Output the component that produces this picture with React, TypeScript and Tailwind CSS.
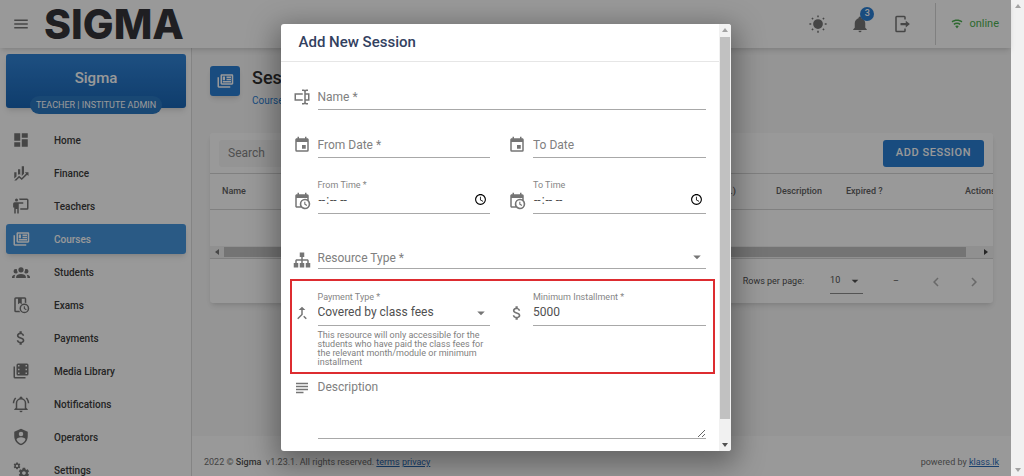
import React from "react";

const paths = {
  menu: "M3,6H21V8H3V6M3,11H21V13H3V11M3,16H21V18H3V16Z",
  home: "M13,3V9H21V3M13,21H21V11H13M3,21H11V15H3M3,13H11V3H3V13Z",
  finance:
    "M6,16.5L3,19.44V11H6M11,14.66L9.43,13.32L8,14.64V7H11M16,13L13,16V3H16M18.81,12.81L17,11H22V16L20.21,14.21L13,21.36L9.53,18.34L5.75,22H3L9.47,15.66L13,18.64",
  teacher:
    "M20,17A2,2 0 0,0 22,15V4A2,2 0 0,0 20,2H9.46C9.81,2.61 10,3.3 10,4H20V15H11V17M15,7V9H9V22H7V16H5V22H3V14H1.5V9A2,2 0 0,1 3.5,7H15M8,4A2,2 0 0,1 6,6A2,2 0 0,1 4,4A2,2 0 0,1 6,2A2,2 0 0,1 8,4Z",
  courses:
    "M4 7V19H19V21H4C2 21 2 19 2 19V7H4M21 5V15H8V5H21M21.3 3H7.7C6.76 3 6 3.7 6 4.55V15.45C6 16.31 6.76 17 7.7 17H21.3C22.24 17 23 16.31 23 15.45V4.55C23 3.7 22.24 3 21.3 3M9 6H12V11H9V6M20 14H9V12H20V14M20 8H14V6H20V8M20 11H14V9H20V11Z",
  students:
    "M12,5.5A3.5,3.5 0 0,1 15.5,9A3.5,3.5 0 0,1 12,12.5A3.5,3.5 0 0,1 8.5,9A3.5,3.5 0 0,1 12,5.5M5,8C5.56,8 6.08,8.15 6.53,8.42C6.38,9.85 6.8,11.27 7.66,12.38C7.16,13.34 6.16,14 5,14A3,3 0 0,1 2,11A3,3 0 0,1 5,8M19,8A3,3 0 0,1 22,11A3,3 0 0,1 19,14C17.84,14 16.84,13.34 16.34,12.38C17.2,11.27 17.62,9.85 17.47,8.42C17.92,8.15 18.44,8 19,8M5.5,18.25C5.5,16.18 8.41,14.5 12,14.5C15.59,14.5 18.5,16.18 18.5,18.25V20H5.5V18.25M0,20V18.5C0,17.11 1.89,15.94 4.45,15.6C3.86,16.28 3.5,17.22 3.5,18.25V20H0M24,20H20.5V18.25C20.5,17.22 20.14,16.28 19.55,15.6C22.11,15.94 24,17.11 24,18.5V20Z",
  exams:
    "M5,1.5H17A2,2 0 0 1 19,3.5V9.3A7 7 0 0 0 17,9V3.5H13V11L10.5,9.3L8,11V3.5H5V19.5H9.7A7 7 0 0 0 11.1,21.5H5A2,2 0 0 1 3,19.5V3.5A2,2 0 0 1 5,1.5M16.5,10A6.5,6.5 0 1 1 16.5,23A6.5,6.5 0 1 1 16.5,10M16.5,12A4.5,4.5 0 1 0 16.5,21A4.5,4.5 0 1 0 16.5,12M15.7,13.5H17.2V16.3L19.5,17.7L18.8,18.9L15.7,17.1Z",
  dollar:
    "M11.8,10.9C9.53,10.31 8.8,9.7 8.8,8.75C8.8,7.66 9.81,6.9 11.5,6.9C13.28,6.9 13.94,7.75 14,9H16.21C16.14,7.28 15.09,5.7 13,5.19V3H10V5.16C8.06,5.58 6.5,6.84 6.5,8.77C6.5,11.08 8.41,12.23 11.2,12.9C13.7,13.5 14.2,14.38 14.2,15.31C14.2,16 13.71,17.1 11.5,17.1C9.44,17.1 8.63,16.18 8.5,15H6.32C6.44,17.19 8.08,18.42 10,18.83V21H13V18.85C14.95,18.48 16.5,17.35 16.5,15.3C16.5,12.46 14.07,11.5 11.8,10.9Z",
  media:
    "M4,6H2V20A2,2 0 0,0 4,22H18V20H4V6M8,2H20A2,2 0 0 1 22,4V16A2,2 0 0 1 20,18H8A2,2 0 0 1 6,16V4A2,2 0 0 1 8,2M8,4V6H10V4H8M8,9V11H10V9H8M8,14V16H10V14H8M18,4V6H20V4H18M18,9V11H20V9H18M18,14V16H20V14H18Z",
  bellRing:
    "M10,21H14A2,2 0 0,1 12,23A2,2 0 0,1 10,21M21,19V20H3V19L5,17V11C5,7.9 7.03,5.17 10,4.29C10,4.19 10,4.1 10,4A2,2 0 0,1 12,2A2,2 0 0,1 14,4C14,4.1 14,4.19 14,4.29C16.97,5.17 19,7.9 19,11V17L21,19M17,11A5,5 0 0,0 12,6A5,5 0 0,0 7,11V18H17V11M19.75,3.19L18.33,4.61C20.04,6.3 21,8.6 21,11H23C23,8.07 21.84,5.25 19.75,3.19M1,11H3C3,8.6 3.96,6.3 5.67,4.61L4.25,3.19C2.16,5.25 1,8.07 1,11Z",
  operator:
    "M12,1L3,5V11C3,16.55 6.84,21.74 12,23C17.16,21.74 21,16.55 21,11V5L12,1M12,5A3,3 0 0,1 15,8A3,3 0 0,1 12,11A3,3 0 0,1 9,8A3,3 0 0,1 12,5M17.13,17C15.92,18.85 14.11,20.24 12,20.92C9.89,20.24 8.08,18.85 6.87,17C6.53,16.5 6.24,16 6,15.47C6,13.82 8.71,12.47 12,12.47C15.29,12.47 18,13.79 18,15.47C17.76,16 17.47,16.5 17.13,17Z",
  cogs: "M15.9,18.45C17.25,18.45 18.35,17.35 18.35,16C18.35,14.65 17.25,13.55 15.9,13.55C14.54,13.55 13.45,14.65 13.45,16C13.45,17.35 14.54,18.45 15.9,18.45M21.1,16.68L22.58,17.84C22.71,17.95 22.75,18.13 22.66,18.29L21.26,20.71C21.17,20.86 21,20.92 20.83,20.86L19.09,20.16C18.73,20.44 18.33,20.67 17.91,20.85L17.64,22.7C17.62,22.87 17.47,23 17.3,23H14.5C14.32,23 14.18,22.87 14.15,22.7L13.89,20.85C13.46,20.67 13.07,20.44 12.71,20.16L10.96,20.86C10.81,20.92 10.62,20.86 10.54,20.71L9.14,18.29C9.05,18.13 9.09,17.95 9.22,17.84L10.7,16.68L10.65,16L10.7,15.31L9.22,14.16C9.09,14.05 9.05,13.86 9.14,13.71L10.54,11.29C10.62,11.13 10.81,11.07 10.96,11.13L12.71,11.84C13.07,11.56 13.46,11.32 13.89,11.15L14.15,9.29C14.18,9.13 14.32,9 14.5,9H17.3C17.47,9 17.62,9.13 17.64,9.29L17.91,11.15C18.33,11.32 18.73,11.56 19.09,11.84L20.83,11.13C21,11.07 21.17,11.13 21.26,11.29L22.66,13.71C22.75,13.86 22.71,14.05 22.58,14.16L21.1,15.31L21.15,16L21.1,16.68M6.69,8.07C7.56,8.07 8.26,7.37 8.26,6.5C8.26,5.63 7.56,4.92 6.69,4.92A1.58,1.58 0 0,0 5.11,6.5C5.11,7.37 5.82,8.07 6.69,8.07M10.03,6.94L11,7.68C11.07,7.75 11.09,7.87 11.03,7.97L10.13,9.53C10.08,9.63 9.96,9.67 9.86,9.63L8.74,9.18L8,9.62L7.81,10.81C7.79,10.92 7.7,11 7.59,11H5.79C5.67,11 5.58,10.92 5.56,10.81L5.4,9.62L4.64,9.18L3.52,9.63C3.41,9.67 3.3,9.63 3.24,9.53L2.34,7.97C2.28,7.87 2.31,7.75 2.39,7.68L3.34,6.94L3.31,6.5L3.34,6.06L2.39,5.32C2.31,5.25 2.28,5.13 2.34,5.03L3.24,3.47C3.3,3.37 3.41,3.33 3.52,3.37L4.63,3.82L5.4,3.38L5.56,2.19C5.58,2.08 5.67,2 5.79,2H7.59C7.7,2 7.79,2.08 7.81,2.19L8,3.38L8.74,3.82L9.86,3.37C9.96,3.33 10.08,3.37 10.13,3.47L11.03,5.03C11.09,5.13 11.07,5.25 11,5.32L10.03,6.06L10.06,6.5L10.03,6.94Z",
  sun: "M12,5.5A6.5,6.5 0 1 1 12,18.5A6.5,6.5 0 1 1 12,5.5M11,0.5H13V3H11V0.5M11,21H13V23.5H11V21M0.5,11H3V13H0.5V11M21,11H23.5V13H21V11M3.2,4.6L4.6,3.2L6.2,4.8L4.8,6.2L3.2,4.6M17.8,4.8L19.4,3.2L20.8,4.6L19.2,6.2L17.8,4.8M3.2,19.4L4.8,17.8L6.2,19.2L4.6,20.8L3.2,19.4M17.8,19.2L19.2,17.8L20.8,19.4L19.4,20.8L17.8,19.2Z",
  bell: "M21,19V20H3V19L5,17V11C5,7.9 7.03,5.17 10,4.29C10,4.19 10,4.1 10,4A2,2 0 0,1 12,2A2,2 0 0,1 14,4C14,4.1 14,4.19 14,4.29C16.97,5.17 19,7.9 19,11V17L21,19M14,21A2,2 0 0,1 12,23A2,2 0 0,1 10,21",
  logout:
    "M5,1H15A2,2 0 0 1 17,3V6H15V3H5V21H15V18H17V21A2,2 0 0 1 15,23H5A2,2 0 0 1 3,21V3A2,2 0 0 1 5,1M10,10.5H17V7.5L22.5,12L17,16.5V13.5H10V10.5Z",
  wifi: "M12,21L15.6,16.2C14.6,15.45 13.35,15 12,15C10.65,15 9.4,15.45 8.4,16.2L12,21M12,3C7.95,3 4.21,4.34 1.2,6.6L3,9C5.5,7.12 8.62,6 12,6C15.38,6 18.5,7.12 21,9L22.8,6.6C19.79,4.34 16.05,3 12,3M12,9C9.3,9 6.81,9.89 4.8,11.4L6.6,13.8C8.1,12.67 9.97,12 12,12C14.03,12 15.9,12.67 17.4,13.8L19.2,11.4C17.19,9.89 14.7,9 12,9Z",
  textbox:
    "M17,7H22V17H17V19A1,1 0 0,0 18,20H20V22H17.5C16.95,22 16,21.55 16,21C16,21.55 15.05,22 14.5,22H12V20H14A1,1 0 0,0 15,19V5A1,1 0 0,0 14,4H12V2H14.5C15.05,2 16,2.45 16,3C16,2.45 16.95,2 17.5,2H20V4H18A1,1 0 0,0 17,5V7M2,7H13V9H4V15H13V17H2V7M20,15V9H17V15H20Z",
  calendar:
    "M19,19H5V8H19M16,1V3H8V1H6V3H5C3.89,3 3,3.89 3,5V19A2,2 0 0,0 5,21H19A2,2 0 0,0 21,19V5C21,3.89 20.1,3 19,3H18V1M17,12H12V17H17V12Z",
  calendarClock:
    "M15,13H16.5V15.82L18.94,17.23L18.19,18.53L15,16.69V13M19,8H5V19H9.67C9.24,18.09 9,17.07 9,16A7,7 0 0,1 16,9C17.07,9 18.09,9.24 19,9.67V8M5,21C3.89,21 3,20.1 3,19V5C3,3.89 3.89,3 5,3H6V1H8V3H16V1H18V3H19A2,2 0 0,1 21,5V11.1C22.24,12.36 23,14.09 23,16A7,7 0 0,1 16,23C14.09,23 12.36,22.24 11.1,21H5M16,11.15A4.85,4.85 0 0,0 11.15,16C11.15,18.68 13.32,20.85 16,20.85A4.85,4.85 0 0,0 20.85,16C20.85,13.32 18.68,11.15 16,11.15Z",
  sitemap:
    "M9,2V8H11V11H5C3.89,11 3,11.89 3,13V16H1V22H7V16H5V13H11V16H9V22H15V16H13V13H19V16H17V22H23V16H21V13C21,11.89 20.11,11 19,11H13V8H15V2H9Z",
  merge:
    "M17,20.41L18.41,19L15,15.59L13.59,17M7.5,8H11V13.59L5.59,19L7,20.41L13,14.41V8H16.5L12,3.5",
  lines: "M4,5H20V7H4V5M4,9H20V11H4V9M4,13H20V15H4V13M4,17H14V19H4V17Z",
  caret: "M7,10L12,15L17,10H7Z",
  left: "M15.41,16.58L10.83,12L15.41,7.41L14,6L8,12L14,18L15.41,16.58Z",
  right: "M8.59,16.58L13.17,12L8.59,7.41L10,6L16,12L10,18L8.59,16.58Z",
};

type IconName = keyof typeof paths;

function Icon({ name, className = "size-[18px]" }: { name: IconName; className?: string }) {
  return (
    <svg viewBox="0 0 24 24" fill="currentColor" fillRule="evenodd" aria-hidden="true" className={`shrink-0 ${className}`}>
      <path d={paths[name]} />
    </svg>
  );
}

const navItems: { label: string; icon: IconName; active?: boolean }[] = [
  { label: "Home", icon: "home" },
  { label: "Finance", icon: "finance" },
  { label: "Teachers", icon: "teacher" },
  { label: "Courses", icon: "courses", active: true },
  { label: "Students", icon: "students" },
  { label: "Exams", icon: "exams" },
  { label: "Payments", icon: "dollar" },
  { label: "Media Library", icon: "media" },
  { label: "Notifications", icon: "bellRing" },
  { label: "Operators", icon: "operator" },
  { label: "Settings", icon: "cogs" },
];

function Header() {
  return (
    <header className="relative z-10 flex h-12 shrink-0 items-center bg-white pl-3 text-[#757575] shadow-md">
      <button aria-label="Toggle menu">
        <Icon name="menu" />
      </button>
      <span className="ml-[14px] font-['Inter'] text-[41px] leading-[46px] font-extrabold text-[#35353a]">SIGMA</span>
      <div className="ml-auto flex h-full items-center">
        <button aria-label="Theme" className="mr-6">
          <Icon name="sun" />
        </button>
        <button aria-label="Notifications" className="relative mr-6">
          <Icon name="bell" />
          <span className="absolute -top-2 left-[9px] flex size-[14px] items-center justify-center rounded-full bg-[#2b7fd4] text-[9px] font-medium text-white">
            3
          </span>
        </button>
        <button aria-label="Log out" className="mr-6">
          <Icon name="logout" />
        </button>
        <div className="flex h-[42px] items-center gap-[6px] border-l border-[#d5d5d5] pr-3 pl-[15px] text-[11px] text-[#4caf50]">
          <Icon name="wifi" className="size-3" />
          online
        </div>
      </div>
    </header>
  );
}

function Sidebar() {
  return (
    <aside className="w-48 shrink-0 border-r border-[#dcdcdc] bg-white px-[6px] pt-[6px]">
      <div className="relative mr-[-1px] flex h-[54px] justify-center rounded-[3px] bg-linear-to-b from-[#3285d8] to-[#1966b5] pt-[14px] text-white shadow-md">
        <p className="text-[15px] leading-5 font-medium">Sigma</p>
        <p className="absolute -bottom-[6px] rounded-full bg-[#2b78c2] px-[6px] text-[9px] leading-[18px] whitespace-nowrap">
          TEACHER | INSTITUTE ADMIN
        </p>
      </div>
      <nav className="mt-[17px] mr-[-1px] flex flex-col gap-[3px] text-[10px] font-medium text-[#3c3c3c]">
        {navItems.map((item) => (
          <a
            key={item.label}
            href="#"
            className={`flex h-[30px] items-center gap-6 rounded-[3px] pl-[6px] ${item.active ? "bg-[#4796de] text-white shadow-md" : ""}`}
          >
            <span className={item.active ? "text-white" : "text-[#757575]"}>
              <Icon name={item.icon} />
            </span>
            {item.label}
          </a>
        ))}
      </nav>
    </aside>
  );
}

function Sessions() {
  return (
    <main className="px-[18px] pt-[18px]">
      <div className="flex gap-3">
        <span className="flex size-[30px] items-center justify-center rounded-[3px] bg-[#2b7fd4] text-white shadow-md">
          <Icon name="courses" />
        </span>
        <div>
          <h1 className="text-[18px] leading-6 font-medium text-[#303030]">Sessions</h1>
          <a href="#" className="block pt-[3px] text-[10px] leading-4 text-[#2b7fd4]">
            Courses
          </a>
        </div>
      </div>
      <section className="mt-6 overflow-hidden rounded-[3px] bg-white shadow-md">
        <div className="flex h-10 items-center justify-between px-[9px]">
          <input
            aria-label="Search"
            placeholder="Search"
            className="h-[27px] w-48 rounded-[3px] bg-[#f7f7f7] px-[9px] text-[12px] placeholder:text-[#858585]"
          />
          <button className="h-[27px] rounded-[3px] bg-[#2b7fd4] px-[13px] text-[11px] font-medium tracking-wider text-white">
            ADD SESSION
          </button>
        </div>
        <table className="w-full table-fixed border-t border-[#d5d5d5] text-left text-[9px] text-[#616161]">
          <thead>
            <tr className="h-9 border-b border-[#d5d5d5] [&>th]:font-medium [&>th]:whitespace-nowrap">
              <th className="pl-3">Name</th>
              <th className="w-[120px] pr-10 text-right">Fee (Rs.)</th>
              <th className="w-[70px]">Description</th>
              <th className="w-[119px]">Expired ?</th>
              <th className="w-7">Actions</th>
            </tr>
          </thead>
          <tbody>
            <tr className="h-9">
              <td colSpan={5} />
            </tr>
          </tbody>
        </table>
        <div className="flex h-[13px] items-center justify-between border-b border-[#d5d5d5] bg-[#f1f1f1] px-1 text-[#404040]">
          <svg viewBox="0 0 6 6" className="size-[6px] fill-[#777777]" aria-hidden="true">
            <path d="M5 0V6L1 3Z" />
          </svg>
          <div className="mr-[17px] ml-1 h-[10px] flex-1 bg-[#c1c1c1]" />
          <svg viewBox="0 0 6 6" className="size-[6px] fill-current" aria-hidden="true">
            <path d="M1 0V6L5 3Z" />
          </svg>
        </div>
        <div className="flex h-11 items-center justify-end pt-[2px] pr-[10px] text-[9px] text-[#505050]">
          <label htmlFor="rows">Rows per page:</label>
          <div className="relative mr-[30px] ml-[26px] flex items-center border-b border-[#8d8d8d]">
            <select id="rows" className="h-6 w-[33px] appearance-none bg-transparent">
              <option>10</option>
            </select>
            <span className="pointer-events-none absolute right-0">
              <Icon name="caret" className="size-4" />
            </span>
          </div>
          <span>–</span>
          <button aria-label="Previous page" className="ml-7 text-[#b0b0b0]">
            <Icon name="left" />
          </button>
          <button aria-label="Next page" className="ml-5 text-[#b0b0b0]">
            <Icon name="right" />
          </button>
        </div>
      </section>
    </main>
  );
}

function Footer() {
  return (
    <footer className="mt-auto flex h-10 items-center justify-between bg-white px-3 pt-[13px] text-[9px] text-[#707070]">
      <p>
        2022 © <b className="font-medium text-[#505050]">Sigma</b>&nbsp; v1.23.1. All rights reserved.{" "}
        <a href="#" className="text-[#2b6cb8] underline">terms</a>{" "}
        <a href="#" className="text-[#2b6cb8] underline">privacy</a>
      </p>
      <p>
        powered by <a href="#" className="text-[#2b6cb8] underline">klass.lk</a>
      </p>
    </footer>
  );
}

const control =
  "block w-full border-b border-[#a8a8a8] bg-transparent p-0 text-[12px] leading-4 outline-none placeholder:text-[#808080] placeholder:opacity-100";

function Field({
  icon,
  id,
  label,
  type = "text",
  floating = false,
  value,
}: {
  icon: IconName;
  id: string;
  label: string;
  type?: string;
  floating?: boolean;
  value?: string;
}) {
  return (
    <div className="flex items-end gap-[7px]">
      <span className="pb-1 text-[#757575]">
        <Icon name={icon} />
      </span>
      <div className="min-w-0 flex-1">
        {floating && (
          <label htmlFor={id} className="block text-[9px] leading-[10px] text-[#858585]">
            {label}
          </label>
        )}
        <input
          id={id}
          type={type}
          aria-label={floating ? undefined : label}
          defaultValue={value}
          placeholder={floating ? undefined : label}
          className={`${control} h-6 text-[#505050] ${floating ? "pb-1" : "pb-[2px]"}`}
        />
      </div>
    </div>
  );
}

function ScrollTrack({ className, thumb }: { className: string; thumb: string }) {
  return (
    <div aria-hidden="true" className={`flex shrink-0 flex-col items-center bg-[#f1f1f1] py-1 ${className}`}>
      <svg viewBox="0 0 6 4" className="h-1 w-[6px] fill-[#a3a3a3]">
        <path d="M0 4H6L3 0Z" />
      </svg>
      <div className={`mt-[5px] mb-auto w-[10px] bg-[#c1c1c1] ${thumb}`} />
      <svg viewBox="0 0 6 4" className="h-1 w-[6px] fill-current">
        <path d="M0 0H6L3 4Z" />
      </svg>
    </div>
  );
}

function SessionDialog() {
  return (
    <div
      role="dialog"
      aria-labelledby="dialog-title"
      className="flex w-[450px] overflow-hidden rounded-[3px] bg-white shadow-[0_8px_28px_6px_rgba(0,0,0,0.35)]"
    >
      <div className="min-w-0 flex-1">
        <h2 id="dialog-title" className="border-b border-[#e6e6e6] px-[18px] py-2 text-[15px] leading-[21px] font-medium text-[#33415f]">
          Add New Session
        </h2>
        <form className="pt-6 pr-1 pb-3 pl-[9px]">
          <div className="flex flex-col pr-[9px] pl-[3px]">
            <Field icon="textbox" id="name" label="Name *" />
            <div className="mt-6 grid grid-cols-2 gap-x-[18px] gap-y-[22px]">
              <Field icon="calendar" id="from-date" label="From Date *" />
              <Field icon="calendar" id="to-date" label="To Date" />
              <Field icon="calendarClock" id="from-time" label="From Time *" type="time" floating />
              <Field icon="calendarClock" id="to-time" label="To Time" type="time" floating />
            </div>
            <div className="mt-[33px] flex items-end gap-[7px]">
              <span className="text-[#757575]">
                <Icon name="sitemap" />
              </span>
              <div className="relative flex-1">
                <select aria-label="Resource Type" className={`${control} h-[22px] appearance-none text-[#808080]`}>
                  <option>Resource Type *</option>
                </select>
                <span className="pointer-events-none absolute top-px right-0 text-[#757575]">
                  <Icon name="caret" />
                </span>
              </div>
            </div>
          </div>
          <div className="mt-[10px] grid grid-cols-2 gap-x-[18px] border-2 border-[#dd2c30] pt-[11px] pr-[7px] pb-[5px] pl-px">
            <div className="flex gap-[7px]">
              <span className="pt-3 text-[#757575]">
                <Icon name="merge" />
              </span>
              <div className="flex-1">
                <label htmlFor="payment-type" className="block text-[9px] leading-[10px] text-[#858585]">
                  Payment Type *
                </label>
                <div className="relative">
                  <select
                    id="payment-type"
                    aria-describedby="payment-hint"
                    className={`${control} h-6 appearance-none pb-1 text-[#505050]`}
                  >
                    <option>Covered by class fees</option>
                  </select>
                  <span className="pointer-events-none absolute top-[2px] right-0 text-[#757575]">
                    <Icon name="caret" />
                  </span>
                </div>
                <p id="payment-hint" className="pt-[5px] text-[9px] leading-[9px] text-[#808080]">
                  This resource will only accessible for the students who have paid the class fees for the relevant month/module or
                  minimum installment
                </p>
              </div>
            </div>
            <div>
              <Field icon="dollar" id="installment" label="Minimum Installment *" floating value="5000" />
            </div>
          </div>
          <div className="mt-[5px] flex gap-[7px] pr-[9px] pl-[3px]">
            <span className="text-[#757575]">
              <Icon name="lines" />
            </span>
            <textarea aria-label="Description" placeholder="Description" className={`${control} h-[60px] flex-1 resize-y text-[#505050]`} />
          </div>
        </form>
      </div>
      <ScrollTrack className="w-3 text-[#505050]" thumb="h-[382px]" />
    </div>
  );
}

export default function App() {
  return (
    <div className="relative flex h-screen overflow-hidden bg-[#f9f9f9] font-['Roboto',sans-serif]">
      <div className="relative flex min-w-0 flex-1 flex-col">
        <Header />
        <div className="flex min-h-0 flex-1">
          <Sidebar />
          <div className="flex min-w-0 flex-1 flex-col">
            <Sessions />
            <Footer />
          </div>
        </div>
        <div className="absolute inset-0 z-20 flex items-center justify-center bg-black/40 pb-px">
          <SessionDialog />
        </div>
      </div>
      <ScrollTrack className="w-[13px] text-[#a3a3a3]" thumb="" />
    </div>
  );
}
